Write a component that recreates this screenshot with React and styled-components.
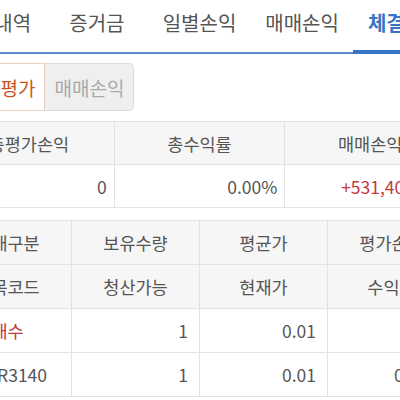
import React from "react";
import styled, { createGlobalStyle } from "styled-components";

const GlobalStyle = createGlobalStyle`
  body {
    margin: 0;
    background: #fff;
    overflow: hidden;
    font-family: "Noto Sans CJK KR", "Noto Sans", sans-serif;
    color: #555;
  }
`;

const tabs = ["체결내역", "증거금", "일별손익", "매매손익", "체결내역"];

const summaryHead = ["총평가손익", "총수익률", "매매손익"];
const summaryValues = [
  { text: "0" },
  { text: "0.00%" },
  { text: "+531,400,000", tone: "up" },
];

const listHead = [
  ["매매구분", "보유수량", "평균가", "평가손익"],
  ["종목코드", "청산가능", "현재가", "수익률"],
];

const listRows = [
  [
    { text: "매수", tone: "up", align: "center" },
    { text: "1" },
    { text: "0.01" },
    { text: "0" },
  ],
  [
    { text: "175R3140", align: "center" },
    { text: "1" },
    { text: "0.01" },
    { text: "0.00%" },
  ],
];

const App = () => {
  return (
    <>
      <GlobalStyle />
      <Page>
        <TabBar>
          {tabs.map((t, i) => (
            <Tab key={i} active={i === 4}>
              {t}
            </Tab>
          ))}
        </TabBar>

        <Segment>
          <SegButton active>총평가</SegButton>
          <SegButton>매매손익</SegButton>
        </Segment>

        <Summary>
          {summaryHead.map((h) => (
            <HeadCell key={h} pad="7px">
              {h}
            </HeadCell>
          ))}
          {summaryValues.map((v, i) => (
            <ValueCell key={i} tone={v.tone} pad="7px">
              {v.text}
            </ValueCell>
          ))}
        </Summary>

        <List>
          {listHead.map((row, r) =>
            row.map((h) => (
              <HeadCell key={r + h} pad="11px" tall>
                {h}
              </HeadCell>
            ))
          )}
          {listRows.map((row, r) =>
            row.map((c, i) => (
              <ValueCell
                key={r + "-" + i}
                tone={c.tone}
                align={c.align}
                pad="11px"
                tall
              >
                {c.text}
              </ValueCell>
            ))
          )}
        </List>
      </Page>
    </>
  );
};

const Page = styled.div`
  width: 513px;
  margin-left: -57px;
`;

const TabBar = styled.nav`
  display: grid;
  grid-template-columns: repeat(5, 1fr);
  border-bottom: 2px solid #5b8ccb;
`;

const Tab = styled.div`
  height: 52px;
  display: flex;
  align-items: center;
  justify-content: center;
  padding-bottom: 8px;
  box-sizing: border-box;
  font-size: 20px;
  color: ${(p) => (p.active ? "#3575c4" : "#555")};
  font-weight: ${(p) => (p.active ? 700 : 400)};
  position: relative;
  &::after {
    content: "";
    display: ${(p) => (p.active ? "block" : "none")};
    position: absolute;
    left: 0;
    right: 0;
    bottom: -2px;
    height: 4px;
    background: #3575c4;
  }
`;

const Segment = styled.div`
  display: flex;
  margin: 9px 0 0 30px;
`;

const SegButton = styled.div`
  height: 48px;
  box-sizing: border-box;
  display: flex;
  align-items: center;
  padding: 0 9px;
  font-size: 19px;
  border: 1px solid ${(p) => (p.active ? "#e6cfc0" : "#dcdcdc")};
  background: ${(p) => (p.active ? "#fff" : "#efefef")};
  color: ${(p) => (p.active ? "#c9541f" : "#a8a8a8")};
  border-radius: ${(p) => (p.active ? "5px 0 0 5px" : "0 5px 5px 0")};
  border-left-width: ${(p) => (p.active ? "1px" : "0")};
`;

const Table = styled.div`
  display: grid;
  border-top: 1px solid #e2e2e2;
  border-left: 1px solid #e2e2e2;
  box-sizing: border-box;
`;

const Summary = styled(Table)`
  grid-template-columns: repeat(3, 1fr);
  margin-top: 10px;
  width: 513px;
`;

const List = styled(Table)`
  grid-template-columns: repeat(4, 1fr);
  margin-top: 12px;
  width: 513px;
`;

const Cell = styled.div`
  height: ${(p) => (p.tall ? "44px" : "43px")};
  box-sizing: border-box;
  display: flex;
  align-items: center;
  padding: 0 ${(p) => p.pad};
  border-right: 1px solid #e2e2e2;
  border-bottom: 1px solid #e2e2e2;
  font-size: 17.5px;
  white-space: nowrap;
`;

const HeadCell = styled(Cell)`
  justify-content: center;
  background: #f6f6f6;
  color: #555;
`;

const ValueCell = styled(Cell)`
  justify-content: ${(p) => (p.align === "center" ? "center" : "flex-end")};
  background: #fff;
  color: ${(p) => (p.tone === "up" ? "#c23b3b" : "#555")};
`;

export default App;
